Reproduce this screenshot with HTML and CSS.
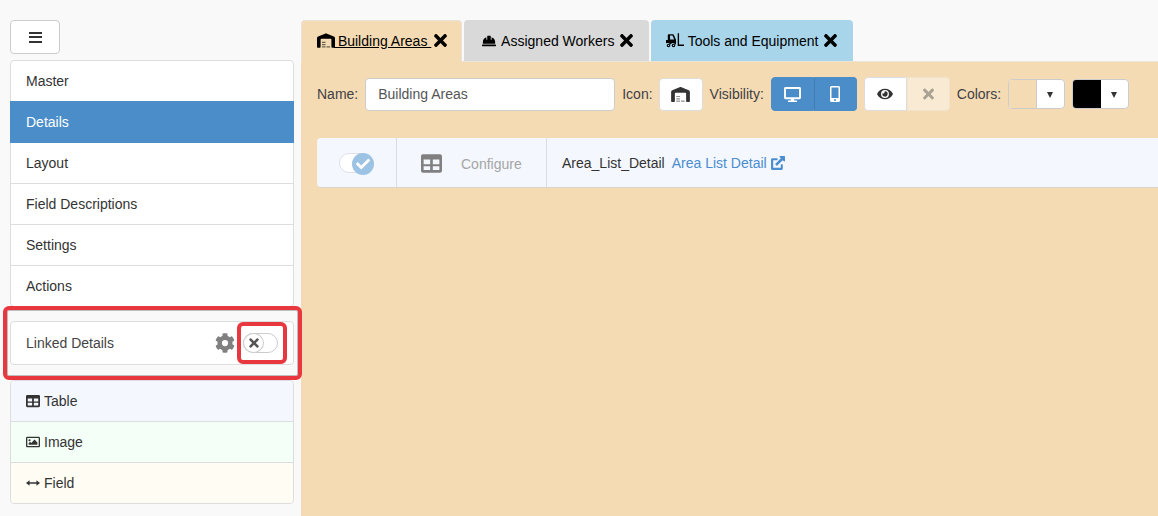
FILE: index.html
```html
<!DOCTYPE html>
<html lang="en">
<head>
<meta charset="utf-8">
<title>Building Areas</title>
<link rel="stylesheet" href="styles.css">
</head>
<body>
<svg class="defs" width="0" height="0" aria-hidden="true">
  <symbol id="warehouse" viewBox="0 0 640 512"><path d="M0 488V171c0-26 16-50 40-60L308 4c8-3 16-3 24 0l268 107c24 10 40 34 40 60v317c0 13-11 24-24 24h-80c-13 0-24-11-24-24V224c0-18-14-32-32-32H160c-18 0-32 14-32 32v264c0 13-11 24-24 24H24c-13 0-24-11-24-24z"/><path opacity=".55" d="M176 384h128v40H176zM176 464h128v40H176zM336 464h128v40H336zM176 304h128v40H176z"/></symbol>
  <symbol id="hat" viewBox="0 0 512 512"><path d="M480 288c0-80-53-147-128-170v90h-32V80c0-9-7-16-16-16h-96c-9 0-16 7-16 16v128h-32v-90C85 141 32 208 32 288v64h448zM496 384H16c-9 0-16 7-16 16v32c0 9 7 16 16 16h480c9 0 16-7 16-16v-32c0-9-7-16-16-16z"/></symbol>
  <symbol id="forklift" viewBox="0 0 640 512"><path d="M416 0h48v400h176v48H416zM96 32h152c13 0 25 8 30 20l74 172c2 4 3 9 3 13v163h-20a96 96 0 0 0-176 0h-16a96 96 0 0 0-143-42V240H64V64c0-18 14-32 32-32zm48 48v144h148L230 80z"/><circle cx="90" cy="432" r="62"/><circle cx="266" cy="432" r="62"/><circle cx="90" cy="432" r="22" fill="#a8d5ea"/><circle cx="266" cy="432" r="22" fill="#a8d5ea"/></symbol>
  <symbol id="times" viewBox="0 0 352 512"><path d="M242 256l100-100c12-12 12-32 0-44l-22-22c-12-12-32-12-44 0L176 190 76 90c-12-12-32-12-44 0L10 112c-12 12-12 32 0 44l100 100L10 356c-12 12-12 32 0 44l22 22c12 12 32 12 44 0l100-100 100 100c12 12 32 12 44 0l22-22c12-12 12-32 0-44z"/></symbol>
  <symbol id="table" viewBox="0 0 512 512"><path fill-rule="evenodd" d="M48 32h416c26 0 48 22 48 48v352c0 26-22 48-48 48H48c-26 0-48-22-48-48V80c0-26 22-48 48-48zM64 160v112h160V160zm224 0v112h160V160zM64 320v96h160v-96zm224 0v96h160v-96z"/></symbol>
  <symbol id="gear" viewBox="0 0 512 512"><path fill-rule="evenodd" d="M487 316l-42-25c4-23 4-47 0-70l42-25c5-3 7-8 6-14-11-36-30-68-55-95-4-4-10-5-15-2l-42 24c-18-15-39-27-61-35V26c0-6-4-11-9-12-37-8-75-8-110 0-6 1-10 6-10 12v49c-22 8-43 20-61 35L88 86c-5-3-11-2-15 2-25 27-44 59-55 95-2 6 1 11 6 14l42 25c-4 23-4 47 0 70l-42 25c-5 3-7 8-6 14 11 36 30 68 55 95 4 4 10 5 15 2l42-24c18 15 39 27 61 35v49c0 6 4 11 10 12 37 8 75 8 110 0 5-1 9-6 9-12v-49c22-8 43-20 61-35l42 24c5 3 11 2 15-2 25-27 44-59 55-95 2-6 0-11-5-14zM256 336a80 80 0 1 1 0-160 80 80 0 0 1 0 160z"/></symbol>
  <symbol id="image" viewBox="0 0 512 512"><path fill-rule="evenodd" d="M48 64h416c26 0 48 22 48 48v288c0 26-22 48-48 48H48c-26 0-48-22-48-48V112c0-26 22-48 48-48zm6 48c-3 0-6 3-6 6v276c0 3 3 6 6 6h404c3 0 6-3 6-6V118c0-3-3-6-6-6zM128 152a40 40 0 1 1 0 80 40 40 0 0 1 0-80zM96 352v-48l56-56 40 40 120-120 104 104v80z"/></symbol>
  <symbol id="arrows" viewBox="0 0 512 512"><path d="M0 256l130-100v76h252v-76l130 100-130 100v-76H130v76z"/></symbol>
  <symbol id="desktop" viewBox="0 0 576 512"><path fill-rule="evenodd" d="M528 0H48C22 0 0 22 0 48v320c0 26 22 48 48 48h192l-16 48h-72c-13 0-24 11-24 24s11 24 24 24h272c13 0 24-11 24-24s-11-24-24-24h-72l-16-48h192c26 0 48-22 48-48V48c0-26-22-48-48-48zm-16 352H64V64h448z"/></symbol>
  <symbol id="mobile" viewBox="0 0 320 512"><path fill-rule="evenodd" d="M272 0H48C22 0 0 22 0 48v416c0 26 22 48 48 48h224c26 0 48-22 48-48V48c0-26-22-48-48-48zM160 480a32 32 0 1 1 0-64 32 32 0 0 1 0 64zm112-108c0 7-5 12-12 12H60c-7 0-12-5-12-12V60c0-7 5-12 12-12h200c7 0 12 5 12 12z"/></symbol>
  <symbol id="eye" viewBox="0 0 576 512"><path fill-rule="evenodd" d="M572 241C518 135 410 64 288 64S58 135 4 241a32 32 0 0 0 0 30c54 106 162 177 284 177s230-71 284-177a32 32 0 0 0 0-30zM288 400a144 144 0 1 1 0-288 144 144 0 0 1 0 288zm0-240a95 95 0 0 0-25 4 48 48 0 0 1-67 67 96 96 0 1 0 92-71z"/></symbol>
  <symbol id="check" viewBox="0 0 512 512"><path d="M173 439L7 273c-10-10-10-26 0-36l36-36c10-10 26-10 36 0l112 112L433 71c10-10 26-10 36 0l36 36c10 10 10 26 0 36L209 439c-10 10-26 10-36 0z"/></symbol>
  <symbol id="external" viewBox="0 0 512 512"><path d="M416 304h-40c-9 0-16 7-16 16v112H80V152h144c9 0 16-7 16-16V96c0-9-7-16-16-16H56C25 80 0 105 0 136v320c0 31 25 56 56 56h320c31 0 56-25 56-56V320c0-9-7-16-16-16zM488 0H336c-21 0-32 26-17 41l42 42-199 198c-9 9-9 24 0 34l35 35c10 9 25 9 34 0l198-199 42 42c15 15 41 4 41-17V24c0-13-11-24-24-24z"/></symbol>
</svg>

<div class="app">
  <aside class="sidebar">
    <button class="menu-btn" type="button" aria-label="Menu">
      <span class="burger"><i></i><i></i><i></i></span>
    </button>

    <nav class="list nav-list">
      <a class="item">Master</a>
      <a class="item active">Details</a>
      <a class="item">Layout</a>
      <a class="item">Field Descriptions</a>
      <a class="item">Settings</a>
      <a class="item">Actions</a>
    </nav>

    <div class="linked">
      <span class="linked-label">Linked Details</span>
      <svg class="gear"><use href="#gear"/></svg>
      <span class="switch off">
        <span class="knob"><svg class="knob-x"><use href="#times"/></svg></span>
      </span>
    </div>

    <div class="list add-list">
      <a class="item add tint-blue"><svg class="add-ic"><use href="#table"/></svg>Table</a>
      <a class="item add tint-green"><svg class="add-ic"><use href="#image"/></svg>Image</a>
      <a class="item add tint-yellow"><svg class="add-ic"><use href="#arrows"/></svg>Field</a>
    </div>

    <div class="mark mark-outer"></div>
    <div class="mark mark-inner"></div>
  </aside>

  <main class="main">
    <div class="tabs">
      <div class="tab tab-active">
        <span class="tab-title underlined"><svg class="tab-ic wide"><use href="#warehouse"/></svg> Building Areas </span>
        <svg class="tab-x"><use href="#times"/></svg>
      </div>
      <div class="tab tab-grey">
        <span class="tab-title"><svg class="tab-ic hat"><use href="#hat"/></svg> Assigned Workers</span>
        <svg class="tab-x"><use href="#times"/></svg>
      </div>
      <div class="tab tab-blue">
        <span class="tab-title"><svg class="tab-ic wide"><use href="#forklift"/></svg> Tools and Equipment</span>
        <svg class="tab-x"><use href="#times"/></svg>
      </div>
    </div>

    <section class="panel">
      <div class="toolbar">
        <label class="lbl lbl-name">Name:</label>
        <input class="name-input" type="text" value="Building Areas">
        <label class="lbl">Icon:</label>
        <button class="icon-btn" type="button"><svg class="wh"><use href="#warehouse"/></svg></button>
        <label class="lbl">Visibility:</label>
        <div class="group">
          <button class="seg seg-blue" type="button"><svg class="ic-desktop"><use href="#desktop"/></svg></button>
          <button class="seg seg-blue seg-last" type="button"><svg class="ic-mobile"><use href="#mobile"/></svg></button>
        </div>
        <div class="group eye-group">
          <button class="seg seg-white" type="button"><svg class="ic-eye"><use href="#eye"/></svg></button>
          <button class="seg seg-fade" type="button"><svg class="ic-x"><use href="#times"/></svg></button>
        </div>
        <label class="lbl">Colors:</label>
        <div class="picker">
          <span class="swatch swatch-tan"></span>
          <span class="caret"></span>
        </div>
        <div class="picker">
          <span class="swatch swatch-black"></span>
          <span class="caret"></span>
        </div>
      </div>

      <div class="row">
        <div class="cell cell-toggle">
          <span class="switch on">
            <span class="knob"><svg class="knob-check"><use href="#check"/></svg></span>
          </span>
        </div>
        <div class="cell cell-config">
          <svg class="config-ic"><use href="#table"/></svg>
          <span class="config-text">Configure</span>
        </div>
        <div class="cell cell-name">
          <span class="detail-name">Area_List_Detail</span>
          <a class="detail-link">Area List Detail<svg class="ext"><use href="#external"/></svg></a>
        </div>
      </div>
    </section>
  </main>
</div>
</body>
</html>
```

FILE: styles.css
```css
* { box-sizing: border-box; }
html, body { margin: 0; height: 516px; overflow: hidden; }
body {
  background: #f9f9f9;
  font-family: "Liberation Sans", Arial, sans-serif;
  font-size: 14px;
  color: #333;
}
svg { fill: currentColor; display: inline-block; }
.defs { position: absolute; }

.app { display: flex; height: 516px; }

/* Sidebar */
.sidebar {
  position: relative;
  width: 301px;
  flex: none;
  padding: 20px 7px 0 10px;
}
.menu-btn {
  display: flex;
  align-items: center;
  justify-content: center;
  width: 50px;
  height: 34px;
  padding: 0;
  background: #fff;
  border: 1px solid #ccc;
  border-radius: 4px;
}
.burger { display: flex; flex-direction: column; gap: 2.5px; width: 13px; }
.burger i { display: block; height: 2px; background: #333; }

.list {
  background: #fff;
  border: 1px solid #ddd;
  border-radius: 4px;
}
.nav-list { margin-top: 6px; }
.item {
  display: block;
  height: 41px;
  padding: 0 15px;
  line-height: 40px;
  color: #333;
  border-bottom: 1px solid #ddd;
}
.nav-list .item:last-child { border-bottom: 0; height: 40px; }
.item.active {
  margin: -1px -1px 0;
  padding-left: 16px;
  height: 42px;
  line-height: 42px;
  background: #4a8dc9;
  border-bottom: 0;
  color: #fff;
}
.linked {
  display: flex;
  align-items: center;
  height: 44px;
  margin-top: 14px;
  padding: 0 15px;
  background: #fff;
  border: 1px solid #ddd;
  border-radius: 4px;
}
.linked-label { flex: 1; color: #444; }
.gear { width: 20px; height: 20px; color: #808080; }

.switch {
  position: relative;
  display: block;
  width: 35px;
  height: 20px;
  background: #fff;
  border: 1px solid #ccc;
  border-radius: 10px;
}
.linked .switch { margin-left: 8px; }
.knob {
  position: absolute;
  top: -1px;
  display: flex;
  align-items: center;
  justify-content: center;
  width: 21px;
  height: 20px;
  border-radius: 50%;
}
.switch.off .knob { left: -1px; background: #fff; border: 1px solid #ccc; }
.knob-x { width: 10px; height: 14px; color: #555; }
.switch.on { border-color: #dde1ea; }
.switch.on .knob {
  left: auto;
  right: -2px;
  width: 22px;
  height: 22px;
  top: -1px;
  background: #9cc2e4;
}
.knob-check { width: 14px; height: 14px; color: #fff; }

.add-list { margin-top: 15px; }
.item.add { display: flex; align-items: center; gap: 4px; }
.item.add:last-child { border-bottom: 0; height: 40px; }
.tint-blue { background: #f4f7fe; border-radius: 4px 4px 0 0; }
.tint-green { background: #f4fff7; }
.tint-yellow { background: #fffcf4; border-radius: 0 0 4px 4px; }
.add-ic { width: 14px; height: 14px; color: #333; flex: none; }

.mark { position: absolute; border: 4px solid #e8373f; border-radius: 6px; }
.mark-outer { left: 3px; top: 306px; width: 299px; height: 74px; box-shadow: inset 0 0 0 1px rgba(80,80,80,.35); }
.mark-inner { left: 237px; top: 322px; width: 50px; height: 42px; }

/* Main */
.main { flex: 1; min-width: 0; display: flex; flex-direction: column; }
.tabs { display: flex; gap: 2px; padding-top: 20px; height: 61px; flex: none; }
.tab {
  display: flex;
  align-items: center;
  height: 41px;
  padding: 0 15px;
  border-radius: 4px 4px 0 0;
  color: #000;
}
.tab-active {
  position: relative;
  height: 42px;
  padding: 0 15px 2px;
  width: 161px;
  background: #f5dbb3;
  border: 1px solid #e9e3d8;
  border-bottom: 0;
  z-index: 1;
}
.tab-grey { width: 185px; background: #d9d9d9; padding-left: 18px; }
.tab-blue { width: 202px; background: #a8d5ea; }
.tab-title { white-space: pre; display: inline-flex; align-items: center; }
.underlined { text-decoration: underline; }
.tab-ic.wide { width: 18px; height: 15px; flex: none; }
.tab-ic.hat { width: 14px; height: 14px; flex: none; margin-right: 2px; }
.underlined .tab-ic { margin-right: -1px; }
.tab-x { width: 13px; height: 19px; margin-left: 6px; flex: none; color: #000; }
.tab-active .tab-x { margin-left: 3px; }

.panel {
  flex: 1;
  padding: 16px 0 0 16px;
  background: #f5dbb3;
  box-shadow: inset 0 1px 0 #ece5d6;
}
.toolbar { display: flex; align-items: center; height: 34px; }
.lbl { color: #3f3f46; margin-right: 7px; }
.name-input {
  width: 250px;
  height: 33px;
  margin-right: 7px;
  padding: 0 12px;
  font: inherit;
  color: #555;
  background: #fff;
  border: 1px solid #ccc;
  border-radius: 4px;
}
.icon-btn {
  display: flex;
  align-items: center;
  justify-content: center;
  width: 44px;
  height: 33px;
  margin-right: 7px;
  margin-left: -1px;
  padding: 0;
  background: #fff;
  border: 1px solid #ddd;
  border-radius: 4px;
  color: #333;
}
.wh { width: 19px; height: 15px; }
.group { display: flex; height: 34px; margin-right: 7px; }
.seg {
  display: flex;
  align-items: center;
  justify-content: center;
  height: 34px;
  width: 43px;
  padding: 0;
  border: 1px solid transparent;
}
.seg-blue {
  background: #4a8dc9;
  color: #fff;
  border-color: #4a8dc9;
  border-radius: 4px 0 0 4px;
}
.seg-last { border-left-color: #3f7db5; border-radius: 0 4px 4px 0; }
.ic-desktop { width: 17px; height: 15px; }
.ic-mobile { width: 10px; height: 16px; }
.seg-white {
  background: #fff;
  border-color: #ddd;
  border-radius: 4px 0 0 4px;
  color: #333;
}
.seg-fade {
  background: #f8ead3;
  border-color: #f2e4cc;
  border-radius: 0 4px 4px 0;
  color: #a9a193;
}
.ic-eye { width: 16px; height: 14px; }
.ic-x { width: 11px; height: 16px; }
.picker {
  display: flex;
  flex: none;
  width: 57px;
  height: 30px;
  margin-right: 7px;
  background: #fff;
  border: 1px solid #ccc;
  border-radius: 4px;
  overflow: hidden;
}
.swatch { width: 28px; flex: none; border-right: 1px solid #ccc; }
.swatch-tan { background: #f5dbb3; }
.swatch-black { background: #000; border-right: 0; }
.caret {
  flex: 1;
  position: relative;
}
.caret::after {
  content: "";
  position: absolute;
  left: 50%;
  top: 12px;
  margin-left: -3.5px;
  border: 3.5px solid transparent;
  border-top: 6px solid #333;
  border-bottom: 0;
}

.row {
  display: flex;
  align-items: stretch;
  height: 50px;
  margin-top: 27px;
  background: #f4f7fe;
  border-bottom: 1px solid #d9d4c8;
  border-radius: 4px 0 0 4px;
}
.cell { display: flex; align-items: center; border-right: 1px solid #d9dde6; }
.cell-toggle { width: 80px; padding-left: 22px; }
.cell-toggle .switch { width: 34px; }
.cell-config { width: 150px; padding: 2px 0 0 24px; }
.config-ic { width: 21px; height: 21px; color: #808080; }
.config-text { margin-left: 19px; color: #a5a5a5; }
.cell-name { flex: 1; border-right: 0; padding-left: 15px; }
.detail-name { color: #333; }
.detail-link { margin-left: 7px; color: #4a8dd0; display: inline-flex; align-items: center; gap: 4px; white-space: pre; }
.ext { width: 14px; height: 14px; }
```
